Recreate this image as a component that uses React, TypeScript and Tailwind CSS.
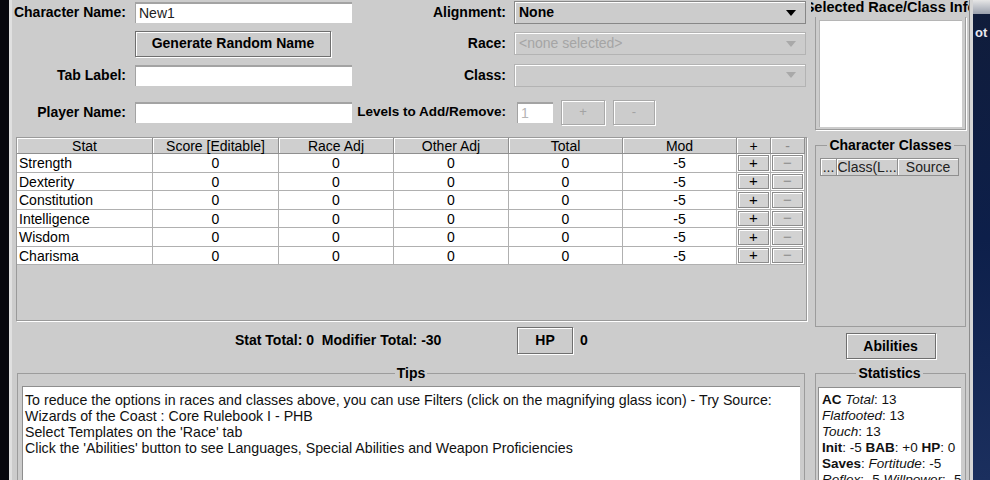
import React from 'react';

const stats = ['Strength', 'Dexterity', 'Constitution', 'Intelligence', 'Wisdom', 'Charisma'];

const tips = [
  'To reduce the options in races and classes above, you can use Filters (click on the magnifying glass icon) - Try Source:',
  'Wizards of the Coast : Core Rulebook I - PHB',
  "Select Templates on the 'Race' tab",
  "Click the 'Abilities' button to see Languages, Special Abilities and Weapon Proficiencies",
];

function Label({ children, className = '' }: { children: React.ReactNode; className?: string }) {
  return <div className={`shrink-0 whitespace-nowrap text-right font-bold ${className}`}>{children}</div>;
}

function TextField({ value, className = '', disabled }: { value?: string; className?: string; disabled?: boolean }) {
  return (
    <div
      className={`flex h-[21px] shrink-0 items-center border-t-2 border-l border-[#a3a3a3] bg-white pl-[3px] text-[14px] ${
        disabled ? 'text-[#b5b5b5]' : 'text-[#222]'
      } ${className}`}
    >
      {value}
    </div>
  );
}

function MetalButton({
  children,
  className = '',
  disabled,
}: {
  children: React.ReactNode;
  className?: string;
  disabled?: boolean;
}) {
  return (
    <div
      className={`flex shrink-0 items-center justify-center border shadow-[inset_1px_1px_0_#ffffff,1px_1px_0_#ffffff] ${
        disabled ? 'border-[#a9a9a9] text-[13px] text-[#a3a3a3]' : 'border-[#6f6f6f] text-[14px] font-bold'
      } ${className}`}
    >
      {children}
    </div>
  );
}

function Combo({ value, disabled }: { value?: string; disabled?: boolean }) {
  return (
    <div
      className={`ml-[8px] flex h-[23px] w-[292px] shrink-0 items-center justify-between border pl-[4px] pr-[9px] shadow-[inset_1px_1px_0_#ffffff] ${
        disabled ? 'border-[#b3b3b3] text-[14px] text-[#a5a5a5]' : 'border-[#878787] text-[14px] font-bold'
      }`}
    >
      <span>{value}</span>
      <svg width="10" height="6" viewBox="0 0 10 6">
        <path d="M0 0h10L5 6z" fill={disabled ? '#a9a9a9' : '#000000'} />
      </svg>
    </div>
  );
}

function HeaderCell({ children, className = '' }: { children?: React.ReactNode; className?: string }) {
  return (
    <div
      className={`flex h-[16px] shrink-0 items-center justify-center border-r border-b border-[#8f8f8f] bg-[#cfcfcf] text-[14px] leading-[16px] shadow-[inset_1px_1px_0_#ffffff] ${className}`}
    >
      {children}
    </div>
  );
}

function PlusMinusCell({ sign }: { sign: '+' | '−' }) {
  return (
    <div className="h-full w-[34px] shrink-0 border-r border-b border-[#b0b0b0] bg-white p-[1px]">
      <div
        className={`flex h-full items-center justify-center border border-[#8c8c8c] bg-[#d2d2d2] text-[15px] shadow-[inset_1px_1px_0_#ffffff] ${
          sign === '+' ? 'text-black' : 'text-[#8c8c8c]'
        }`}
      >
        {sign}
      </div>
    </div>
  );
}

export default function App() {
  return (
    <div className="flex h-[480px] w-[990px] overflow-hidden bg-[#07070d] font-['Liberation_Sans',Arial,sans-serif] text-black">
      <div className="w-[9px] shrink-0" />
      <div className="w-[3px] shrink-0 bg-[#e0e0e0]" />

      <div className="flex shrink-0 bg-[#cccccc]">
        {/* left area */}
        <div className="flex w-[799px] flex-col">
          <div className="mt-[1px] flex h-[23px] shrink-0 items-center">
            <div className="flex w-[340px] shrink-0 items-center">
              <Label className="w-[114px] text-[14px]">Character Name:</Label>
              <TextField value="New1" className="ml-[9px] w-[217px]" />
            </div>
            <Label className="w-[154px] text-[14px]">Alignment:</Label>
            <Combo value="None" />
          </div>

          <div className="mt-[6px] flex h-[27px] shrink-0 items-center">
            <div className="flex w-[340px] shrink-0 items-center">
              <MetalButton className="ml-[123px] h-[26px] w-[196px]">Generate Random Name</MetalButton>
            </div>
            <Label className="w-[154px] text-[14px]">Race:</Label>
            <Combo value="<none selected>" disabled />
          </div>

          <div className="mt-[6px] flex h-[24px] shrink-0 items-center">
            <div className="flex w-[340px] shrink-0 items-center">
              <Label className="w-[114px] text-[14px]">Tab Label:</Label>
              <TextField className="ml-[9px] w-[217px]" />
            </div>
            <Label className="w-[154px] text-[14px]">Class:</Label>
            <Combo disabled />
          </div>

          <div className="mt-[12px] flex h-[26px] shrink-0 items-center">
            <div className="flex w-[340px] shrink-0 items-center">
              <Label className="w-[114px] text-[14px]">Player Name:</Label>
              <TextField className="ml-[9px] w-[217px]" />
            </div>
            <Label className="w-[154px] text-[13.5px]">Levels to Add/Remove:</Label>
            <TextField value="1" disabled className="ml-[11px] w-[36px]" />
            <MetalButton disabled className="ml-[8px] h-[25px] w-[44px]">
              +
            </MetalButton>
            <MetalButton disabled className="ml-[8px] h-[25px] w-[42px]">
              -
            </MetalButton>
          </div>

          {/* stats table */}
          <div className="mt-[12px] ml-[4px] h-[184px] w-[791px] shrink-0 border border-[#9a9a9a] shadow-[1px_1px_0_#ffffff]">
            <div className="flex">
              <HeaderCell className="w-[136px]">Stat</HeaderCell>
              <HeaderCell className="w-[126px]">Score [Editable]</HeaderCell>
              <HeaderCell className="w-[115px]">Race Adj</HeaderCell>
              <HeaderCell className="w-[115px]">Other Adj</HeaderCell>
              <HeaderCell className="w-[114px]">Total</HeaderCell>
              <HeaderCell className="w-[114px]">Mod</HeaderCell>
              <HeaderCell className="w-[34px]">+</HeaderCell>
              <HeaderCell className="w-[34px] text-[#8a8a8a]">-</HeaderCell>
            </div>
            {stats.map((s) => (
              <div key={s} className="flex h-[18.5px] text-[14px] leading-[18px]">
                <div className="w-[136px] border-r border-b border-[#b0b0b0] bg-white pl-[2px]">{s}</div>
                <div className="w-[126px] border-r border-b border-[#b0b0b0] bg-white text-center">0</div>
                <div className="w-[115px] border-r border-b border-[#b0b0b0] bg-white text-center">0</div>
                <div className="w-[115px] border-r border-b border-[#b0b0b0] bg-white text-center">0</div>
                <div className="w-[114px] border-r border-b border-[#b0b0b0] bg-white text-center">0</div>
                <div className="w-[114px] border-r border-b border-[#b0b0b0] bg-white text-center">-5</div>
                <PlusMinusCell sign="+" />
                <PlusMinusCell sign="−" />
              </div>
            ))}
          </div>

          <div className="mt-[6px] flex h-[27px] shrink-0 items-center">
            <div className="ml-[223px] w-[282px] shrink-0 whitespace-nowrap text-[14px] font-bold">
              Stat Total: 0&nbsp;&nbsp;Modifier Total: -30
            </div>
            <MetalButton className="h-[27px] w-[56px]">HP</MetalButton>
            <span className="ml-[7px] text-[14px] font-bold">0</span>
          </div>

          <fieldset className="mt-[11px] ml-[5px] h-[140px] w-[788px] min-w-0 shrink-0 border border-[#9c9c9c] px-[4px] pt-[5px]">
            <legend className="mx-auto px-[2px] text-[14px] font-bold leading-[16px]">Tips</legend>
            <div className="h-[120px] overflow-hidden border-t border-l border-[#8e8e8e] bg-white pt-[5px] pl-[2px] text-[14.2px] leading-[16px] text-[#111]">
              {tips.map((t) => (
                <div key={t} className="whitespace-nowrap">
                  {t}
                </div>
              ))}
            </div>
          </fieldset>
        </div>

        {/* right column */}
        <div className="flex w-[158px] flex-col overflow-hidden pl-[4px] pr-[3px]">
          <div className="flex h-[17px] shrink-0 justify-center whitespace-nowrap text-[14.5px] font-bold leading-[15px]">
            Selected Race/Class Info
          </div>
          <div className="h-[113px] shrink-0 border-x border-b border-[#9c9c9c] px-[3px] pt-[3px] pb-[2px] shadow-[1px_1px_0_#ffffff]">
            <div className="h-full border-t border-l border-[#b5b5b5] bg-white" />
          </div>

          <fieldset className="mt-[7px] h-[190px] min-w-0 shrink-0 border border-[#9c9c9c] px-[4px] pt-[5px]">
            <legend className="mx-auto px-[2px] text-[14px] font-bold leading-[16px]">Character Classes</legend>
            <div className="flex text-[14px] text-[#222]">
              <HeaderCell className="h-[18px] w-[17px] border-l border-t">...</HeaderCell>
              <HeaderCell className="h-[18px] w-[61px] border-t">Class(L...</HeaderCell>
              <HeaderCell className="h-[18px] w-[61px] border-t">Source</HeaderCell>
            </div>
          </fieldset>

          <MetalButton className="mt-[6px] h-[26px] w-[90px] self-center">Abilities</MetalButton>

          <fieldset className="mt-[6px] h-[140px] min-w-0 shrink-0 border border-[#9c9c9c] pl-[2px] pr-[4px] pt-[6px]">
            <legend className="mx-auto px-[2px] text-[14px] font-bold leading-[16px]">Statistics</legend>
            <div className="h-[120px] overflow-hidden whitespace-nowrap border-t border-l border-[#8e8e8e] bg-white pt-[4px] pl-[3px] text-[13.5px] leading-[16px] text-[#111]">
              <div>
                <b>AC</b> <i>Total</i>: 13
              </div>
              <div>
                <i>Flatfooted</i>: 13
              </div>
              <div>
                <i>Touch</i>: 13
              </div>
              <div>
                <b>Init</b>: -5 <b>BAB</b>: +0 <b>HP</b>: 0
              </div>
              <div>
                <b>Saves</b>: <i>Fortitude</i>: -5
              </div>
              <div>
                <i>Reflex</i>: -5 <i>Willpower</i>: -5
              </div>
            </div>
          </fieldset>
        </div>
      </div>

      {/* frame edge */}
      <div className="w-[4px] shrink-0 border-l border-[#8c8c8c] bg-[#d6d6d6]" />

      {/* desktop */}
      <div className="flex w-[17px] shrink-0 flex-col bg-gradient-to-b from-[#101c3a] via-[#0d1f4a] to-[#1b2f5e]">
        <div className="h-[14px] bg-gradient-to-b from-[#e6e6e6] to-[#9aa0ad]" />
        <div className="mt-[11px] pl-[2px] text-[13px] font-bold leading-[15px] text-[#e8e8f0]">ot</div>
      </div>
    </div>
  );
}
